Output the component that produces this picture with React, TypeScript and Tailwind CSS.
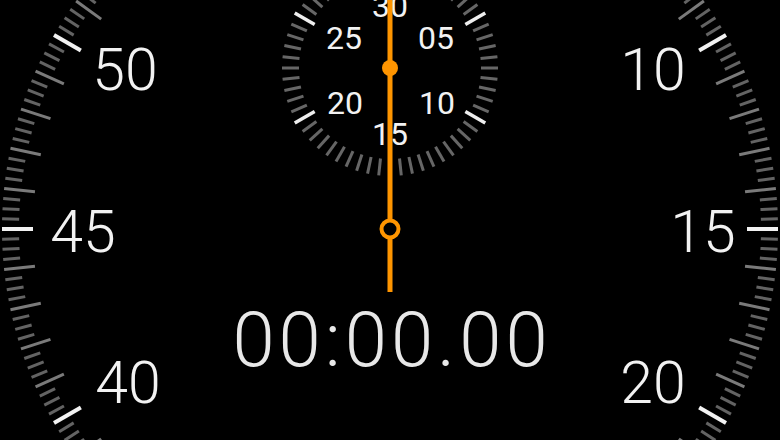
const CX = 390;
const CY = 229;
const SX = 390;
const SY = 68;

const rad = (deg: number) => (deg * Math.PI) / 180;

function polar(cx: number, cy: number, r: number, deg: number) {
  return { x: cx + r * Math.sin(rad(deg)), y: cy - r * Math.cos(rad(deg)) };
}

const mainTicks = Array.from({ length: 240 }, (_, i) => {
  const deg = i * 1.5;
  const major = i % 20 === 0;
  const medium = i % 4 === 0;
  const a = polar(CX, CY, 388, deg);
  const b = polar(CX, CY, major || medium ? 357 : 371, deg);
  return { a, b, major, medium };
});

const subTicks = Array.from({ length: 60 }, (_, i) => {
  const deg = i * 6;
  const major = i % 10 === 0;
  const a = polar(SX, SY, major ? 110 : 108, deg);
  const b = polar(SX, SY, major ? 87 : 91, deg);
  return { a, b, major };
});

// measured centres of the visible numerals
const mainLabels = [
  { t: "50", x: 125, y: 69 },
  { t: "45", x: 83, y: 231 },
  { t: "40", x: 128, y: 382 },
  { t: "10", x: 653, y: 69 },
  { t: "15", x: 703, y: 231 },
  { t: "20", x: 653, y: 382 },
];

const subLabels = [
  { t: "30", x: 390, y: 5 },
  { t: "05", x: 436, y: 37 },
  { t: "10", x: 437, y: 102 },
  { t: "15", x: 390, y: 133 },
  { t: "20", x: 345, y: 102 },
  { t: "25", x: 344, y: 37 },
];

export default function App() {
  return (
    <div className="relative h-[440px] w-[780px] overflow-hidden bg-black">
      <svg width="780" height="440" viewBox="0 0 780 440" className="block">
        {mainTicks.map((t, i) => (
          <line
            key={i}
            x1={t.a.x}
            y1={t.a.y}
            x2={t.b.x}
            y2={t.b.y}
            stroke={t.major ? "#f2f2f2" : t.medium ? "#7a7a7a" : "#636363"}
            strokeWidth={t.major ? 4 : 3}
          />
        ))}

        {subTicks.map((t, i) => (
          <line
            key={i}
            x1={t.a.x}
            y1={t.a.y}
            x2={t.b.x}
            y2={t.b.y}
            stroke={t.major ? "#eeeeee" : "#666666"}
            strokeWidth={t.major ? 3.5 : 3}
          />
        ))}

        <g className="font-['Roboto','Liberation_Sans',sans-serif] font-light" fill="#f2f2f2">
          {mainLabels.map((l) => (
            <text key={l.t} x={l.x} y={l.y + 21} fontSize="59" textAnchor="middle">
              {l.t}
            </text>
          ))}
          {subLabels.map((l) => (
            <text key={l.t} x={l.x} y={l.y + 11.5} fontSize="32" textAnchor="middle" fontWeight="400">
              {l.t}
            </text>
          ))}
        </g>

        {/* hands */}
        <line x1={CX} y1={-10} x2={CX} y2={292} stroke="#ff9500" strokeWidth="5" />
        <circle cx={SX} cy={SY} r="8" fill="#ff9500" />
        <circle cx={CX} cy={CY} r="8.5" fill="#000" stroke="#ff9500" strokeWidth="4" />
      </svg>

      <div className="absolute left-0 right-0 top-[302px] pl-[4px] text-center font-['Roboto','Liberation_Sans',sans-serif] text-[76px] font-light leading-none tracking-[4px] text-[#e8e8e8]">
        00:00.00
      </div>
    </div>
  );
}
